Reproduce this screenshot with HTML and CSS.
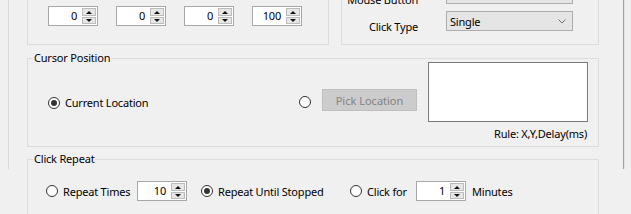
FILE: index.html
```html
<!DOCTYPE html>
<html lang="en">
<head>
    <meta charset="UTF-8">
    <meta name="viewport" content="width=device-width, initial-scale=1.0">
    <title>Auto Clicker</title>
    <link rel="stylesheet" href="styles.css">
</head>
<body>
    <div class="panel">
        <div class="top-row">
            <fieldset class="group group-interval">
                <div class="spins">
                    <div class="spin"><span class="spin-val">0</span><span class="spin-btns"><span class="spin-up"></span><span class="spin-down"></span></span></div>
                    <div class="spin"><span class="spin-val">0</span><span class="spin-btns"><span class="spin-up"></span><span class="spin-down"></span></span></div>
                    <div class="spin"><span class="spin-val">0</span><span class="spin-btns"><span class="spin-up"></span><span class="spin-down"></span></span></div>
                    <div class="spin"><span class="spin-val">100</span><span class="spin-btns"><span class="spin-up"></span><span class="spin-down"></span></span></div>
                </div>
            </fieldset>
            <fieldset class="group group-options">
                <div class="opt-row">
                    <span class="opt-label">Mouse Button</span>
                    <div class="combo"><span>Left</span><svg width="8" height="5" viewBox="0 0 8 5"><polyline points="0.5,0.5 4,4 7.5,0.5" fill="none" stroke="#707070" stroke-width="1"/></svg></div>
                </div>
                <div class="opt-row">
                    <span class="opt-label">Click Type</span>
                    <div class="combo"><span>Single</span><svg width="8" height="5" viewBox="0 0 8 5"><polyline points="0.5,0.5 4,4 7.5,0.5" fill="none" stroke="#707070" stroke-width="1"/></svg></div>
                </div>
            </fieldset>
        </div>

        <fieldset class="group group-cursor">
            <legend>Cursor Position</legend>
            <div class="cursor-row">
                <label class="option option-current"><span class="radio checked"></span>Current Location</label>
                <span class="radio"></span>
                <button class="pick-btn" disabled>Pick Location</button>
                <div class="coords">
                    <div class="coords-box"></div>
                    <div class="coords-rule">Rule: X,Y,Delay(ms)</div>
                </div>
            </div>
        </fieldset>

        <fieldset class="group group-repeat">
            <legend>Click Repeat</legend>
            <div class="repeat-row">
                <label class="option w-times"><span class="radio"></span>Repeat Times</label>
                <div class="spin"><span class="spin-val">10</span><span class="spin-btns"><span class="spin-up"></span><span class="spin-down"></span></span></div>
                <label class="option w-until"><span class="radio checked"></span>Repeat Until Stopped</label>
                <label class="option w-for"><span class="radio"></span>Click for</label>
                <div class="spin"><span class="spin-val">1</span><span class="spin-btns"><span class="spin-up"></span><span class="spin-down"></span></span></div>
                <span class="unit">Minutes</span>
            </div>
        </fieldset>
    </div>
</body>
</html>
```

FILE: styles.css
```css
/* Win32-ish auto clicker panel */
html, body { margin: 0; height: 100%; overflow: hidden; }
body {
    background: #f0f0f0;
    font-family: "Noto Sans", "Open Sans", sans-serif;
    font-size: 11px;
    letter-spacing: -0.2px;
    color: #000;
}

.panel {
    box-sizing: border-box;
    width: 616px;
    height: 100%;
    margin-left: 8px;
    padding-left: 18px;
    border-left: 1px solid #d9d9d9;
    border-right: 1px solid #a0a0a0;
    box-shadow: 1px 0 0 #e3e3e3;
}

.group {
    box-sizing: border-box;
    margin: 0;
    padding: 0;
    border: 1px solid #dcdcdc;
    min-inline-size: 0;
}
.group legend {
    margin-left: 5px;
    padding: 0 1px;
    line-height: 14px;
}

/* top row, scrolled partly out of view */
.top-row { display: flex; gap: 12px; margin-top: -45px; height: 90px; }
.group-interval { width: 302px; height: 90px; display: flex; align-items: flex-end; }
.group-options { width: 258px; height: 90px; display: flex; flex-direction: column; justify-content: flex-end; padding-bottom: 13px; gap: 7px; }

.spins { display: flex; gap: 18px; padding-left: 20px; padding-bottom: 18px; }

.spin {
    box-sizing: border-box;
    width: 50px;
    height: 20px;
    display: flex;
    background: #fff;
    border: 1px solid #a8a8a8;
}
.spin-val { flex: 1; text-align: right; padding-right: 5px; line-height: 18px; }
.spin-btns { width: 14px; display: flex; flex-direction: column; margin: 1px 1px 1px 0; gap: 1px; }
.spin-up, .spin-down {
    flex: 1;
    background: #e6e6e6;
    border: 1px solid #bcbcbc;
    position: relative;
}
.spin-up::after, .spin-down::after {
    content: "";
    position: absolute;
    left: 3px;
    top: 2px;
    border-left: 3px solid transparent;
    border-right: 3px solid transparent;
}
.spin-up::after { border-bottom: 3px solid #111; }
.spin-down::after { border-top: 3px solid #111; top: 1px; }

.opt-row { display: flex; align-items: flex-start; height: 20px; }
.opt-label { width: 76px; text-align: right; padding-top: 9px; line-height: 14px; }
.combo {
    box-sizing: border-box;
    width: 127px;
    height: 20px;
    margin-left: 28px;
    padding: 0 6px 0 3px;
    display: flex;
    align-items: center;
    justify-content: space-between;
    background: #e5e5e5;
    border: 1px solid #adadad;
}

/* cursor position */
.group-cursor { width: 572px; margin-top: 6px; padding-bottom: 5px; }
.cursor-row { display: flex; align-items: center; margin-top: -3px; padding: 0 9px 0 20px; }
.option { display: flex; align-items: center; gap: 5px; white-space: nowrap; }
.option-current { width: 251px; padding-top: 2px; }

.radio {
    box-sizing: border-box;
    width: 12px;
    height: 12px;
    flex: none;
    border: 1px solid #333;
    border-radius: 50%;
    background: #fff;
    position: relative;
}
.radio.checked::after {
    content: "";
    position: absolute;
    left: 2px;
    top: 2px;
    width: 6px;
    height: 6px;
    border-radius: 50%;
    background: #333;
}

.pick-btn {
    box-sizing: border-box;
    width: 95px;
    height: 22px;
    margin-left: 11px;
    margin-top: -3px;
    padding: 0;
    font: inherit;
    color: #838383;
    background: #cccccc;
    border: 1px solid #bfbfbf;
}
.coords { margin-left: 11px; }
.coords-box { box-sizing: border-box; width: 160px; height: 60px; background: #fff; border: 1px solid #7a7a7a; }
.coords-rule { text-align: right; line-height: 14px; margin-top: 5px; padding-right: 1px; }

/* click repeat */
.group-repeat { width: 572px; margin-top: 5px; padding-bottom: 20px; }
.repeat-row { display: flex; align-items: center; margin-top: 15px; padding-left: 18px; }
.w-times { width: 91px; }
.w-until { width: 149px; margin-left: 14px; }
.w-for { width: 66px; }
.unit { margin-left: 6px; }
```
